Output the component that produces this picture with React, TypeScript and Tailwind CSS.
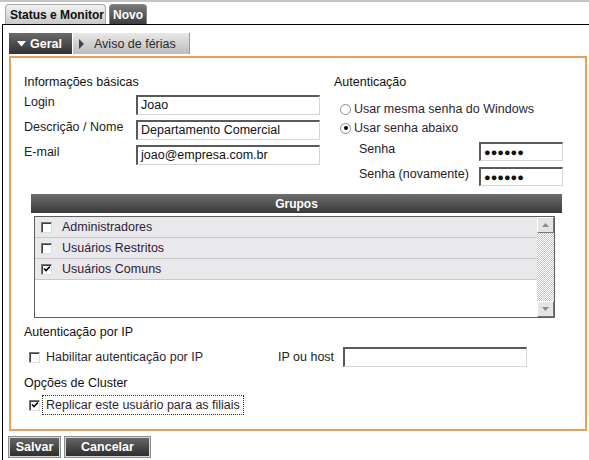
import React from "react";

const Input = ({ value, w, h = 20, password = false }: { value: string; w: number; h?: number; password?: boolean }) => (
  <div
    className="bg-white border-t-2 border-l-2 border-t-[#5a5a5a] border-l-[#5a5a5a] border-b border-r border-b-[#d6d6d6] border-r-[#d6d6d6] flex items-center pl-[3px] text-[#111] text-[12.5px] leading-none overflow-hidden"
    style={{ width: w, height: h }}
  >
    {password ? <span className="text-[11px] tracking-[0px] font-bold">●●●●●●</span> : value}
  </div>
);

const Check = ({ checked = false }: { checked?: boolean }) => (
  <div className="w-[11px] h-[11px] bg-white border border-t-[#777] border-l-[#777] border-b-[#ddd] border-r-[#ddd] shadow-[inset_1px_1px_0_#404040] flex items-center justify-center shrink-0">
    {checked && (
      <svg width="8" height="8" viewBox="0 0 8 8">
        <path d="M1 3.5 L3 5.5 L7 1.5" stroke="#000" strokeWidth="1.6" fill="none" />
      </svg>
    )}
  </div>
);

const Radio = ({ checked = false }: { checked?: boolean }) => (
  <div className="w-[11px] h-[11px] rounded-full bg-white border border-[#8a8a8a] flex items-center justify-center shrink-0">
    {checked && <div className="w-[4px] h-[4px] rounded-full bg-black" />}
  </div>
);

export default function App() {
  const groups = [
    { name: "Administradores", checked: false },
    { name: "Usuários Restritos", checked: false },
    { name: "Usuários Comuns", checked: true },
  ];
  return (
    <div className="w-[589px] h-[460px] bg-white overflow-hidden font-['Liberation_Sans',Arial,sans-serif] text-[12.5px] leading-[14px] text-[#1a1a1a]">
      {/* Top tabs */}
      <div className="border-t-2 border-[#c4c4c4] pt-[2px] pl-[5px] flex gap-[3px] h-[24px]">
        <div className="h-[20px] w-[101px] rounded-t-[4px] border border-b-0 border-[#a8a8a8] bg-gradient-to-b from-[#f2f2f2] to-[#c9c9c9] flex items-center pl-[4px] font-bold text-[12px] text-[#111]">
          Status e Monitor
        </div>
        <div className="h-[20px] w-[38px] rounded-t-[4px] border border-b-0 border-[#888] bg-gradient-to-b from-[#7a7a7a] to-[#3e3e3e] flex items-center justify-center font-bold text-[12px] text-white">
          Novo
        </div>
      </div>

      {/* Panel */}
      <div className="ml-[2px] border-t border-l border-black h-[436px] pl-[6px]">
        {/* sub tabs */}
        <div className="mt-[8px] flex gap-[1px] h-[21px]">
          <div className="w-[63px] h-full bg-gradient-to-b from-[#6a6a6a] to-[#333] flex items-center pl-[8px] gap-[4px] text-white font-bold text-[12.5px]">
            <svg width="9" height="6" viewBox="0 0 9 6">
              <path d="M0 0 H9 L4.5 5.5 Z" fill="#fff" />
            </svg>
            Geral
          </div>
          <div className="w-[117px] h-full bg-gradient-to-b from-[#e8e8e8] to-[#bcbcbc] border-r border-[#999] flex items-center pl-[6px] gap-[10px] text-[#2a2a2a] text-[12.5px]">
            <svg width="5" height="10" viewBox="0 0 5 10">
              <path d="M0 0 L5 5 L0 10 Z" fill="#444" />
            </svg>
            Aviso de férias
          </div>
        </div>

        {/* Orange box */}
        <div className="mt-[2px] w-[578px] h-[375px] border-2 border-[#e8a15c]">
          {/* Top section */}
          <div className="flex pt-[17px] pl-[13px]">
            <div className="w-[296px] flex flex-col">
              <div className="text-[#111]">Informações básicas</div>
              <div className="mt-[6px] flex flex-col gap-[5px]">
                {[
                  ["Login", "Joao"],
                  ["Descrição / Nome", "Departamento Comercial"],
                  ["E-mail", "joao@empresa.com.br"],
                ].map(([l, v]) => (
                  <div key={l} className="flex items-start h-[20px]">
                    <div className="w-[112px] text-[#222]">{l}</div>
                    <Input value={v} w={184} />
                  </div>
                ))}
              </div>
            </div>
            <div className="ml-[14px] flex flex-col">
              <div className="text-[#111]">Autenticação</div>
              <div className="mt-[13px] flex flex-col gap-[5px] pl-[6px]">
                <div className="flex items-center gap-[3px] h-[14px] text-[#2e1f33]">
                  <Radio />
                  Usar mesma senha do Windows
                </div>
                <div className="flex items-center gap-[3px] h-[14px] text-[#2e1f33]">
                  <Radio checked />
                  Usar senha abaixo
                </div>
              </div>
              <div className="mt-[5px] flex flex-col gap-[4px] pl-[25px]">
                {["Senha", "Senha (novamente)"].map((l) => (
                  <div key={l} className="flex items-start h-[21px]">
                    <div className="w-[120px] pt-[2px] text-[#222]">{l}</div>
                    <div className="mt-[2px]">
                      <Input value="" w={84} h={19} password />
                    </div>
                  </div>
                ))}
              </div>
            </div>
          </div>

          {/* Grupos */}
          <div className="mt-[8px] ml-[20px] w-[531px] h-[19px] bg-gradient-to-b from-[#6e6e6e] to-[#3a3a3a] flex items-center justify-center text-white font-bold text-[12px]">
            Grupos
          </div>
          <div className="mt-[3px] ml-[23px] w-[521px] h-[102px] border border-[#5e5e5e] flex bg-white">
            <div className="flex-1 flex flex-col">
              {groups.map((g) => (
                <div key={g.name} className="h-[21px] bg-[#e9e9ec] border-b border-[#c9c9cc] flex items-center pl-[6px] gap-[10px] text-[#301a38]">
                  <Check checked={g.checked} />
                  {g.name}
                </div>
              ))}
            </div>
            <div className="w-[17px] flex flex-col bg-[repeating-conic-gradient(#c4c4c4_0%_25%,#ffffff_0%_50%)] bg-[length:2px_2px]">
              <div className="w-[17px] h-[16px] bg-[#e4e4e4] border border-t-white border-l-white border-b-[#777] border-r-[#777] flex items-center justify-center">
                <svg width="7" height="4" viewBox="0 0 7 4">
                  <path d="M0 4 L3.5 0 L7 4 Z" fill="#8a8a8a" />
                </svg>
              </div>
              <div className="flex-1" />
              <div className="w-[17px] h-[16px] bg-[#e4e4e4] border border-t-white border-l-white border-b-[#777] border-r-[#777] flex items-center justify-center">
                <svg width="7" height="4" viewBox="0 0 7 4">
                  <path d="M0 0 L3.5 4 L7 0 Z" fill="#8a8a8a" />
                </svg>
              </div>
            </div>
          </div>

          {/* Auth por IP */}
          <div className="mt-[7px] pl-[13px] text-[#111]">Autenticação por IP</div>
          <div className="mt-[8px] flex items-center h-[20px] pl-[18px]">
            <Check />
            <div className="ml-[6px] w-[232px] text-[#2e1f33]">Habilitar autenticação por IP</div>
            <div className="w-[65px] text-[#222]">IP ou host</div>
            <Input value="" w={184} />
          </div>

          {/* Cluster */}
          <div className="mt-[9px] pl-[13px] text-[#111]">Opções de Cluster</div>
          <div className="mt-[5px] flex items-center h-[20px] pl-[18px]">
            <Check checked />
            <div className="ml-[2px] h-[20px] px-[3px] border border-dotted border-[#333] flex items-center text-[#2e1f33]">
              Replicar este usuário para as filiais
            </div>
          </div>
        </div>

        {/* Buttons */}
        <div className="mt-[5px] -ml-[1px] flex gap-[3px]">
          <div className="w-[53px] h-[22px] border border-[#8c8c8c] shadow-[inset_0_0_0_1px_#d8d8d8] bg-gradient-to-b from-[#6a6a6a] to-[#2c2c2c] flex items-center justify-center text-white font-bold text-[12.5px]">
            Salvar
          </div>
          <div className="w-[87px] h-[22px] border border-[#8c8c8c] shadow-[inset_0_0_0_1px_#d8d8d8] bg-gradient-to-b from-[#6a6a6a] to-[#2c2c2c] flex items-center justify-center text-white font-bold text-[12.5px]">
            Cancelar
          </div>
        </div>
      </div>
    </div>
  );
}
